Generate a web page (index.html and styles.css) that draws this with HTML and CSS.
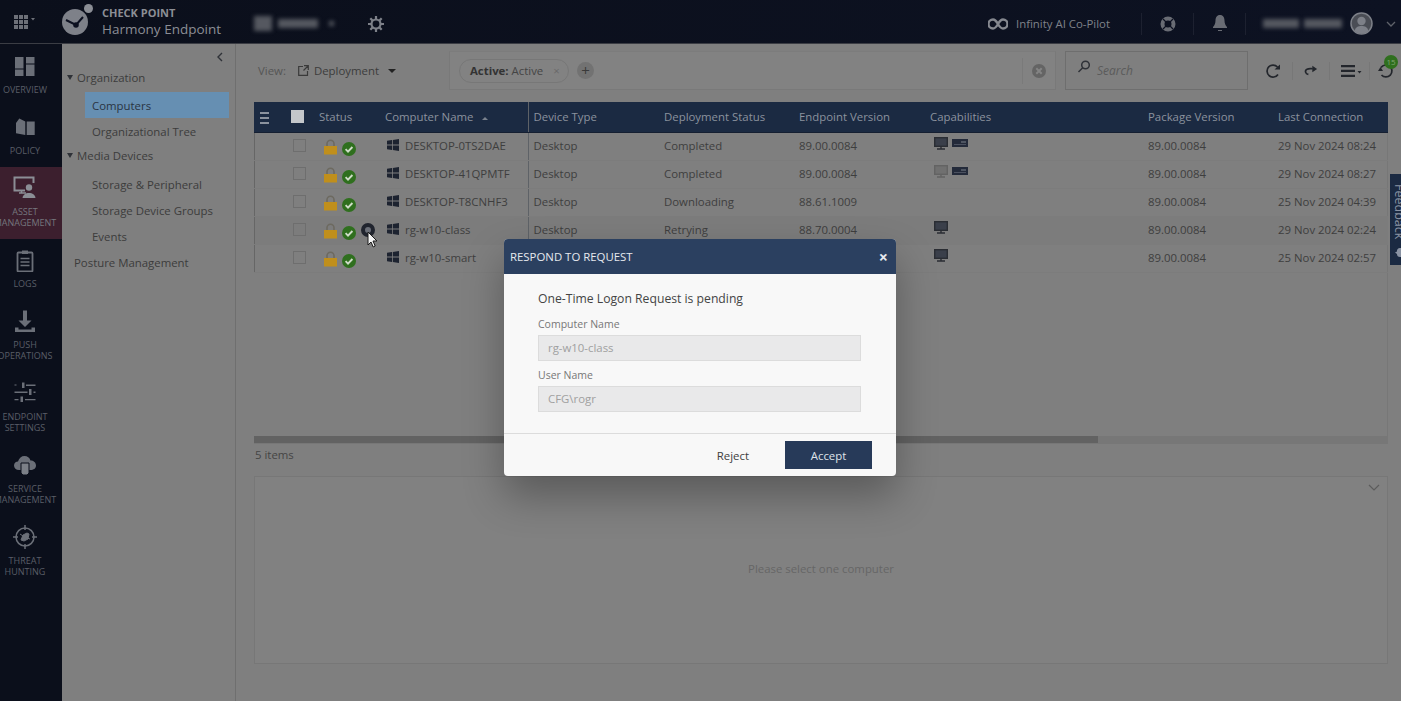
FILE: index.html
```html
<!DOCTYPE html>
<html lang="en">
<head>
<meta charset="UTF-8">
<meta name="viewport" content="width=device-width, initial-scale=1.0">
<title>Harmony Endpoint</title>
<link rel="stylesheet" href="styles.css">
</head>
<body>

<svg class="defs" width="0" height="0">
    <symbol id="win" viewBox="0 0 12 12">
        <path d="M0 1.8 5 1v4.6H0zM5.8 .9 12 0v5.6H5.8zM0 6.4h5V11l-5-.8zM5.8 6.4H12V12l-6.2-.9z"/>
    </symbol>
    <symbol id="lock" viewBox="0 0 13 16">
        <path class="lock-bow" d="M3 8V4.8a3.5 3.5 0 0 1 7 0V8" fill="none" stroke="#6d6a60" stroke-width="1.6"/>
        <rect y="7" width="13" height="8.5" fill="#c08f1c"/>
    </symbol>
    <symbol id="ok" viewBox="0 0 14 14">
        <circle cx="7" cy="7" r="7" fill="#2f6f1e"/>
        <path d="M3.6 7.2 6 9.6l4.4-4.6" fill="none" stroke="#cfdcc8" stroke-width="1.9"/>
    </symbol>
    <symbol id="screen" viewBox="0 0 14 13">
        <rect x=".7" y=".7" width="12.6" height="8.6" fill="#3a3f4a" stroke="#2a2d33" stroke-width="1.4"/>
        <path d="M7 9.5v2M3 12h8" stroke="#2a2d33" stroke-width="1.4"/>
    </symbol>
    <symbol id="screen-off" viewBox="0 0 14 13">
        <rect x=".7" y=".7" width="12.6" height="8.6" fill="#707070" stroke="#636363" stroke-width="1.4"/>
        <path d="M7 9.5v2M3 12h8" stroke="#636363" stroke-width="1.4"/>
    </symbol>
    <symbol id="drive" viewBox="0 0 16 8">
        <rect width="16" height="8" fill="#232a3a"/>
        <path d="M9 3h5" stroke="#7b808a"/>
        <path d="M2 5.500h12" stroke="#4b5160"/>
    </symbol>
</svg>

<header class="topbar">
    <div class="topbar-left">
        <svg class="apps" width="22" height="14" viewBox="0 0 22 14" fill="#6d7078">
            <path d="M0 0h4v4H0zM5 0h4v4H5zM10 0h4v4h-4zM0 5h4v4H0zM5 5h4v4H5zM10 5h4v4h-4zM0 10h4v4H0zM5 10h4v4H5zM10 10h4v4h-4zM17 3h4l-2 2.500z"/>
        </svg>
        <svg class="logo" width="32" height="32" viewBox="0 0 32 32">
            <circle cx="13" cy="18" r="13" fill="#7e8189"/>
            <circle cx="26.500" cy="4.500" r="4.500" fill="#8b8e95"/>
            <path d="M4 16l10 5 7-8" fill="none" stroke="#0c1020" stroke-width="2"/>
            <circle cx="14" cy="21" r="2.800" fill="#0c1020"/>
        </svg>
        <div class="brand">
            <div class="brand-top">CHECK POINT</div>
            <div class="brand-name">Harmony Endpoint</div>
        </div>
        <div class="blur-group">
            <span class="blur b1"></span><span class="blur b2"></span><span class="blur b3"></span>
        </div>
        <svg class="gear" width="16" height="16" viewBox="0 0 16 16">
            <circle cx="8" cy="8" r="4.500" fill="none" stroke="#7d8088" stroke-width="2.200"/>
            <path d="M8 0v3M8 13v3M0 8h3M13 8h3M2.300 2.300l2.100 2.100M11.600 11.600l2.100 2.100M2.300 13.700l2.100-2.100M11.600 4.400l2.100-2.100" stroke="#7d8088" stroke-width="2.200"/>
        </svg>
    </div>
    <div class="topbar-right">
        <svg width="20" height="12" viewBox="0 0 20 12">
            <path d="M10 6C8 2.500 6.800 1.500 5 1.500a4.500 4.500 0 0 0 0 9c1.800 0 3-1 5-4.500s3.200-4.500 5-4.500a4.500 4.500 0 0 1 0 9c-1.800 0-3-1-5-4.500z" fill="none" stroke="#85888f" stroke-width="2.400"/>
        </svg>
        <span class="copilot">Infinity AI Co-Pilot</span>
        <span class="top-sep"></span>
        <svg class="top-icon" width="16" height="16" viewBox="0 0 16 16">
            <circle cx="8" cy="8" r="5.500" fill="none" stroke="#696c74" stroke-width="4"/>
            <path d="M3 3l3 3M13 3l-3 3M3 13l3-3M13 13l-3-3" stroke="#0c1020" stroke-width="1.200"/>
        </svg>
        <span class="top-sep"></span>
        <svg class="top-icon" width="16" height="17" viewBox="0 0 16 17" fill="#696c74">
            <path d="M8 0c3.200 0 4.500 2.500 4.500 5.500 0 3 1 4.800 2.500 6.500v1H1v-1c1.500-1.700 2.500-3.500 2.500-6.500C3.500 2.500 4.800 0 8 0zM6 15h4v1H6z"/>
        </svg>
        <span class="top-sep"></span>
        <div class="blur-user"><span class="blur u1"></span><span class="blur u2"></span></div>
        <svg class="avatar" width="23" height="23" viewBox="0 0 23 23">
            <circle cx="11.500" cy="11.500" r="10.500" fill="#4a4d55" stroke="#7d8088" stroke-width="1.500"/>
            <circle cx="11.500" cy="9" r="4.200" fill="#7d8088"/>
            <path d="M4.500 19c1-4 3.500-5 7-5s6 1 7 5a10 10 0 0 1-14 0z" fill="#7d8088"/>
        </svg>
        <svg class="chev" width="10" height="6" viewBox="0 0 10 6">
            <path d="M1 1l4 4 4-4" fill="none" stroke="#5f626a" stroke-width="1.300"/>
        </svg>
    </div>
</header>

<div class="layout">
    <nav class="rail">
        <a class="rail-item">
            <svg width="24" height="24" viewBox="0 0 24 24" fill="#6b6f78">
                <path d="M2 3h8.500v11.500H2zM13 3h8.500v6.500H13zM2 15.500h8.500V22H2zM13 10.500h8.500V22H13z"/>
            </svg>
            <span>Overview</span>
        </a>
        <a class="rail-item">
            <svg width="24" height="24" viewBox="0 0 24 24" fill="#6b6f78">
                <path d="M3 8l3.300-4.500 6 3V20L3 18.300zM13.700 6.500h8V20h-8z"/>
            </svg>
            <span>Policy</span>
        </a>
        <a class="rail-item active">
            <svg width="24" height="24" viewBox="0 0 24 24" fill="none" stroke="#8b8e95">
                <path d="M12 14.500H1.500V1.500h19V7" stroke-width="2"/>
                <path d="M6 17h7M8.500 15v2" stroke-width="1.500"/>
                <circle cx="16" cy="11.500" r="3.200" fill="#8b8e95" stroke="none"/>
                <path d="M9.500 22c.5-3.500 3-5 6.500-5s6 1.500 6.500 5z" fill="#8b8e95" stroke="none"/>
            </svg>
            <span>Asset</span>
            <span>Management</span>
        </a>
        <a class="rail-item">
            <svg width="24" height="24" viewBox="0 0 24 24" fill="none" stroke="#6b6f78">
                <rect x="4.500" y="4.500" width="15" height="19" rx="1" stroke-width="1.800"/>
                <path d="M9 2.500h6v3.500H9z" fill="#6b6f78" stroke="none"/>
                <path d="M7.500 10.500h9M7.500 14h9M7.500 17.500h9" stroke-width="1.500"/>
            </svg>
            <span>Logs</span>
        </a>
        <a class="rail-item">
            <svg width="24" height="24" viewBox="0 0 24 24" fill="#6b6f78">
                <path d="M10 1.500h4v10h4.500L12 18l-6.500-6.500H10zM2 18.500h3.500v2h13v-2H22V23H2z"/>
            </svg>
            <span>Push</span>
            <span>Operations</span>
        </a>
        <a class="rail-item">
            <svg width="24" height="24" viewBox="0 0 24 24" fill="#6b6f78">
                <path d="M1.500 3.500h2v1h-2zM9 1.500h2.500V7H9zM13 3.500h9.500v1.500H13zM1.500 10.500h13V12h-13zM16 8h2.500v6H16zM20.500 10.500h2V12h-2zM1.500 18h4v1.200h-4zM7.500 15.500H10V21H7.500zM12 18h10.500v1.200H12z"/>
            </svg>
            <span>Endpoint</span>
            <span>Settings</span>
        </a>
        <a class="rail-item">
            <svg width="24" height="24" viewBox="0 0 24 24" fill="#6b6f78">
                <path d="M6 17C3 17 1 15 1 12.500S3 8.500 5 8.500C6 5 8.500 3 11.500 3c3 0 5 1.500 6 4.500 3 0 5.500 2 5.500 5s-2.500 4.500-5.500 4.500z"/>
                <path d="M8 10h8v10l-2 2h-4l-2-2z" fill="#7b7f87" stroke="#0b0f1b"/>
            </svg>
            <span>Service</span>
            <span>Management</span>
        </a>
        <a class="rail-item">
            <svg width="24" height="24" viewBox="0 0 24 24" fill="none" stroke="#6b6f78" stroke-width="1.500">
                <circle cx="12" cy="12" r="9"/>
                <path d="M12 0v5M12 19v5M0 12h5M19 12h5"/>
                <path d="M8 15l2-5 4-2 2 1-1 5-4 2zM7 9l3 2M17 14l-3-1" fill="#6b6f78" stroke-width="1"/>
            </svg>
            <span>Threat</span>
            <span>Hunting</span>
        </a>
    </nav>

    <aside class="sidebar">
        <div class="collapse">
            <svg width="6" height="10" viewBox="0 0 6 10"><path d="M5 1 1 5l4 4" fill="none" stroke="#2f3238" stroke-width="1.400"/></svg>
        </div>
        <div class="tree-head tree-org"><i class="tree-arrow"></i>Organization</div>
        <div class="tree-leaf selected">Computers</div>
        <div class="tree-leaf">Organizational Tree</div>
        <div class="tree-head tree-media"><i class="tree-arrow"></i>Media Devices</div>
        <div class="tree-leaf">Storage &amp; Peripheral</div>
        <div class="tree-leaf">Storage Device Groups</div>
        <div class="tree-leaf">Events</div>
        <div class="tree-root">Posture Management</div>
    </aside>

    <main class="main">
        <div class="toolbar">
            <div class="view">
                <span class="view-label">View:</span>
                <svg width="11" height="11" viewBox="0 0 11 11" fill="none" stroke="#3a3a3a" stroke-width="1.200">
                    <path d="M5 1.500H.7v8.800h8.800V6M6 .7h4.300V5M10 1 5.500 5.500"/>
                </svg>
                <span class="view-value">Deployment</span>
                <i class="caret"></i>
            </div>
            <div class="filters">
                <div class="chip"><b>Active:</b> Active <span class="chip-x">×</span></div>
                <div class="chip-add">+</div>
                <div class="filters-clear">
                    <svg width="14" height="14" viewBox="0 0 14 14">
                        <circle cx="7" cy="7" r="7" fill="#646464"/>
                        <path d="M4.300 4.300l5.400 5.400M9.700 4.300 4.300 9.700" stroke="#848484" stroke-width="2"/>
                    </svg>
                </div>
            </div>
            <div class="search">
                <svg width="14" height="14" viewBox="0 0 14 14" fill="none" stroke="#2f3238" stroke-width="1.500">
                    <circle cx="8.500" cy="5" r="3.800"/>
                    <path d="M5.700 7.800 1.500 12"/>
                </svg>
                <span>Search</span>
            </div>
            <div class="tools">
                <svg width="16" height="16" viewBox="0 0 16 16" fill="none" stroke="#23262c" stroke-width="1.700">
                    <path d="M13 11.500A6 6 0 1 1 12.500 4"/>
                    <path d="M9.500 6.500h5.500V1.500z" fill="#23262c" stroke="none"/>
                </svg>
                <span class="tool-sep"></span>
                <svg width="14" height="11" viewBox="0 0 16 12" fill="none" stroke="#23262c" stroke-width="1.900">
                    <path d="M5 10.500C1.500 10 .5 6 3.500 4.500 5.500 3.500 8 4 10 4"/>
                    <path d="M9.500 .5 15 4.200 9.500 8z" fill="#23262c" stroke="none"/>
                </svg>
                <span class="tool-sep"></span>
                <svg width="21" height="12" viewBox="0 0 21 12" fill="#23262c">
                    <path d="M0 0h14v2.300H0zM0 4.800h14v2.300H0zM0 9.700h14V12H0zM16.500 6h4l-2 2.500z"/>
                </svg>
                <span class="tool-sep tool-sep-last"></span>
                <div class="history">
                    <svg width="16" height="16" viewBox="0 0 16 16" fill="none" stroke="#23262c" stroke-width="1.700">
                        <path d="M3 4.500A6 6 0 1 1 3.500 12"/>
                        <path d="M0 8h5L2.500 4z" fill="#23262c" stroke="none"/>
                    </svg>
                    <span class="badge">15</span>
                </div>
            </div>
        </div>

        <section class="grid">
            <table class="computers">
                <colgroup>
                    <col class="c-menu"><col class="c-check"><col class="c-status"><col class="c-name">
                    <col class="c-type"><col class="c-deploy"><col class="c-ver"><col class="c-cap">
                    <col class="c-pkg"><col class="c-last">
                </colgroup>
                <thead>
                    <tr>
                        <th class="cell-menu">
                            <svg width="9" height="12" viewBox="0 0 9 12" fill="#8b929e"><path d="M0 0h9v2H0zM0 5h9v2H0zM0 10h9v2H0z"/></svg>
                        </th>
                        <th><span class="head-check"></span></th>
                        <th class="cell-status">Status</th>
                        <th class="cell-name">Computer Name <i class="sort"></i></th>
                        <th>Device Type</th>
                        <th>Deployment Status</th>
                        <th>Endpoint Version</th>
                        <th>Capabilities</th>
                        <th>Package Version</th>
                        <th>Last Connection</th>
                    </tr>
                </thead>
                <tbody>
                    <tr>
                        <td></td><td><span class="row-check"></span></td>
                        <td class="cell-status"><svg class="i-lock"><use href="#lock"/></svg><svg class="i-ok"><use href="#ok"/></svg></td>
                        <td class="cell-name"><svg class="i-win"><use href="#win"/></svg>DESKTOP-0TS2DAE</td>
                        <td>Desktop</td><td>Completed</td><td>89.00.0084</td>
                        <td class="cell-cap"><svg class="i-screen"><use href="#screen"/></svg><svg class="i-drive"><use href="#drive"/></svg></td>
                        <td>89.00.0084</td><td>29 Nov 2024 08:24</td>
                    </tr>
                    <tr>
                        <td></td><td><span class="row-check"></span></td>
                        <td class="cell-status"><svg class="i-lock"><use href="#lock"/></svg><svg class="i-ok"><use href="#ok"/></svg></td>
                        <td class="cell-name"><svg class="i-win"><use href="#win"/></svg>DESKTOP-41QPMTF</td>
                        <td>Desktop</td><td>Completed</td><td>89.00.0084</td>
                        <td class="cell-cap"><svg class="i-screen"><use href="#screen-off"/></svg><svg class="i-drive"><use href="#drive"/></svg></td>
                        <td>89.00.0084</td><td>29 Nov 2024 08:27</td>
                    </tr>
                    <tr>
                        <td></td><td><span class="row-check"></span></td>
                        <td class="cell-status"><svg class="i-lock"><use href="#lock"/></svg><svg class="i-ok"><use href="#ok"/></svg></td>
                        <td class="cell-name"><svg class="i-win"><use href="#win"/></svg>DESKTOP-T8CNHF3</td>
                        <td>Desktop</td><td>Downloading</td><td>88.61.1009</td>
                        <td class="cell-cap"></td>
                        <td>89.00.0084</td><td>25 Nov 2024 04:39</td>
                    </tr>
                    <tr class="hover">
                        <td></td><td><span class="row-check"></span></td>
                        <td class="cell-status">
                            <svg class="i-lock"><use href="#lock"/></svg><svg class="i-ok"><use href="#ok"/></svg>
                            <svg class="i-otl" viewBox="0 0 14 14">
                                <circle cx="7" cy="7" r="5" fill="#6b6f78" stroke="#20242e" stroke-width="4"/>
                            </svg>
                        </td>
                        <td class="cell-name"><svg class="i-win"><use href="#win"/></svg>rg-w10-class</td>
                        <td>Desktop</td><td>Retrying</td><td>88.70.0004</td>
                        <td class="cell-cap"><svg class="i-screen"><use href="#screen"/></svg></td>
                        <td>89.00.0084</td><td>29 Nov 2024 02:24</td>
                    </tr>
                    <tr>
                        <td></td><td><span class="row-check"></span></td>
                        <td class="cell-status"><svg class="i-lock"><use href="#lock"/></svg><svg class="i-ok"><use href="#ok"/></svg></td>
                        <td class="cell-name"><svg class="i-win"><use href="#win"/></svg>rg-w10-smart</td>
                        <td></td><td></td><td></td>
                        <td class="cell-cap"><svg class="i-screen"><use href="#screen"/></svg></td>
                        <td>89.00.0084</td><td>25 Nov 2024 02:57</td>
                    </tr>
                </tbody>
            </table>
            <div class="hscroll"><div class="hscroll-thumb"></div></div>
        </section>

        <div class="count">5 items</div>

        <section class="details">
            <svg class="details-toggle" width="12" height="7" viewBox="0 0 12 7">
                <path d="M1 1l5 5 5-5" fill="none" stroke="#5c5c5c" stroke-width="1.200"/>
            </svg>
            <span>Please select one computer</span>
        </section>
    </main>
</div>

<div class="feedback">
    <span>Feedback</span>
    <svg width="11" height="12" viewBox="0 0 11 12" fill="#8a93a3">
        <path d="M5 1h6v9H5a3 3 0 0 1-3-3L0 5.500 2 4.500A3 3 0 0 1 5 1z"/>
    </svg>
</div>

<svg class="cursor" width="12" height="18" viewBox="0 0 12 18">
    <path d="M1 1v13l3-3 2.200 5 2-1-2.200-5H10z" fill="#f4f4f4" stroke="#1a1a1a"/>
</svg>

<div class="modal">
    <div class="modal-head">
        <span>RESPOND TO REQUEST</span>
        <span class="modal-close">×</span>
    </div>
    <div class="modal-body">
        <div class="modal-title">One-Time Logon Request is pending</div>
        <label class="field-label">Computer Name</label>
        <div class="field-input">rg-w10-class</div>
        <label class="field-label">User Name</label>
        <div class="field-input">CFG\rogr</div>
    </div>
    <div class="modal-foot">
        <button type="button" class="btn-reject">Reject</button>
        <button type="button" class="btn-accept">Accept</button>
    </div>
</div>

</body>
</html>
```

FILE: styles.css
```css
* {
    box-sizing: border-box;
}
html, body {
    height: 100%;
}
body {
    margin: 0;
    overflow: hidden;
    position: relative;
    font-family: "Open Sans", Arial, sans-serif;
    font-size: 11.4px;
    color: #3c3c3c;
    background-color: #7f7f7f;
}
.defs {
    position: absolute;
}

/* top bar */
.topbar {
    height: 44px;
    padding-top: 4px;
    display: flex;
    justify-content: space-between;
    align-items: center;
    background: linear-gradient(90deg, #0b0f1b, #0d1222);
    border-bottom: 1px solid #3b3d44;
}
.topbar-left,
.topbar-right {
    display: flex;
    align-items: center;
}
.apps {
    margin-left: 14px;
    margin-top: -3px;
}
.logo {
    margin-left: 26px;
    margin-top: -7px;
}
.brand {
    margin-left: 8px;
    color: #8b8e95;
}
.brand-top {
    font-size: 11px;
    font-weight: 700;
    line-height: 14px;
    margin-top: -3px;
}
.brand-name {
    font-size: 13.5px;
    line-height: 19px;
}
.blur {
    display: inline-block;
    background: #555860;
    filter: blur(2px);
}
.blur-group {
    display: flex;
    align-items: center;
    margin-left: 33px;
    width: 114px;
}
.b1 {
    width: 18px;
    height: 15px;
}
.b2 {
    width: 40px;
    height: 9px;
    margin-left: 6px;
}
.b3 {
    width: 5px;
    height: 5px;
    margin-left: 11px;
}
.copilot {
    margin-left: 8px;
    width: 125px;
    color: #7f828a;
}
.top-sep {
    width: 1px;
    height: 22px;
    background: #1d2130;
}
.top-icon {
    margin: 0 17.5px;
}
.blur-user {
    display: flex;
    margin-left: 17px;
    gap: 5px;
}
.u1 {
    width: 36px;
    height: 9px;
}
.u2 {
    width: 38px;
    height: 9px;
}
.avatar {
    margin-left: 8px;
}
.chev {
    margin: 0 5px 0 13px;
}

/* main layout */
.layout {
    display: flex;
    height: 657px;
}

.rail {
    width: 62px;
    flex-shrink: 0;
    padding-top: 1px;
    overflow: hidden;
    background-color: #0b0f1b;
}
.rail-item {
    display: flex;
    flex-direction: column;
    align-items: center;
    padding: 9px 12px 11px 0;
    color: #5a5e67;
    font-size: 9px;
    line-height: 11px;
    text-transform: uppercase;
    white-space: nowrap;
}
.rail-item svg {
    margin-bottom: 6px;
}
.rail-item.active {
    background-color: #3c1f2e;
    color: #75767d;
}

.sidebar {
    position: relative;
    width: 174px;
    flex-shrink: 0;
    padding-top: 23px;
    border-right: 1px solid #6f6f6f;
}
.collapse {
    position: absolute;
    top: 6px;
    right: 12px;
}
.tree-head {
    display: flex;
    align-items: center;
    height: 20px;
    padding-left: 5px;
}
.tree-arrow {
    width: 0;
    height: 0;
    margin-right: 4px;
    border-left: 3px solid transparent;
    border-right: 3px solid transparent;
    border-top: 5px solid #2f3238;
}
.tree-org {
    margin-bottom: 5px;
}
.tree-media {
    margin-top: 1px;
    margin-bottom: 6px;
}
.tree-leaf {
    display: flex;
    align-items: center;
    height: 26px;
    margin-left: 23px;
    margin-right: 6px;
    padding-left: 7px;
}
.tree-leaf.selected {
    background-color: #668fb2;
    color: #2a3442;
}
.tree-root {
    display: flex;
    align-items: center;
    height: 26px;
    padding-left: 12px;
}

.main {
    flex: 1;
    min-width: 0;
    padding: 7px 13px 0 18px;
}

/* toolbar */
.toolbar {
    display: flex;
    height: 51px;
}
.toolbar > div {
    flex-shrink: 0;
}
.view {
    display: flex;
    align-items: center;
    height: 39px;
    width: 195px;
    padding-left: 4px;
}
.view-label {
    color: #555;
    margin-right: 12px;
}
.view-value {
    margin-left: 5px;
}
.caret {
    width: 0;
    height: 0;
    margin-left: 9px;
    border-left: 4px solid transparent;
    border-right: 4px solid transparent;
    border-top: 4px solid #222;
}
.filters {
    display: flex;
    align-items: center;
    width: 607px;
    height: 39px;
    padding-left: 9px;
    background-color: #828282;
    border: 1px solid #797979;
    border-top-color: #7c7c7c;
}
.chip {
    height: 24px;
    width: 110px;
    padding: 0 0 0 10px;
    line-height: 22px;
    border: 1px solid #777;
    border-radius: 12px;
    color: #444;
    white-space: nowrap;
}
.chip b {
    color: #333;
}
.chip-x {
    margin-left: 7px;
    color: #6a6a6a;
}
.chip-add {
    width: 17px;
    height: 17px;
    margin-left: 8px;
    border-radius: 50%;
    background-color: #727272;
    color: #3a3a3a;
    text-align: center;
    font-size: 15px;
    line-height: 16px;
}
.filters-clear {
    display: flex;
    align-items: center;
    height: 26px;
    margin-left: auto;
    padding: 0 9px 0 9px;
    border-left: 1px solid #7a7a7a;
}
.search {
    display: flex;
    width: 183px;
    height: 39px;
    margin-left: 9px;
    padding: 8px 0 0 11px;
    gap: 6px;
    border: 1px solid #6e6e6e;
    font-style: italic;
    color: #5b5b5b;
}
.search span {
    line-height: 22px;
    font-size: 12px;
}
.tools {
    display: flex;
    align-items: center;
    height: 39px;
    margin-left: 17px;
}
.tool-sep {
    width: 1px;
    height: 18px;
    margin: 0 11px;
    background-color: #777;
}
.tool-sep-last {
    margin-left: 7px;
    margin-right: 8px;
}
.history {
    position: relative;
    height: 16px;
}
.badge {
    position: absolute;
    top: -8px;
    left: 6px;
    width: 14px;
    height: 14px;
    border-radius: 50%;
    background-color: #2f6f1e;
    color: #7fa46f;
    font-size: 8px;
    line-height: 14px;
    text-align: center;
}

/* computers table */
.grid {
    height: 342px;
    border-right: 1px solid #777;
    border-bottom: 1px solid #777;
    display: flex;
    flex-direction: column;
    justify-content: space-between;
}
.computers {
    width: 100%;
    table-layout: fixed;
    border-collapse: collapse;
}
.c-menu { width: 31px; }
.c-check { width: 27px; }
.c-status { width: 68px; }
.c-name { width: 148px; }
.c-type { width: 131px; }
.c-deploy { width: 135px; }
.c-ver { width: 131px; }
.c-cap { width: 218px; }
.c-pkg { width: 130px; }
.c-last { width: 115px; }

.computers th {
    height: 30px;
    padding: 0 0 0 5px;
    background-color: #1b2a42;
    color: #8b929e;
    font-weight: 400;
    text-align: left;
    white-space: nowrap;
    border-bottom: 1px solid #151f31;
}
.computers td {
    height: 28px;
    padding: 0 0 1px 5px;
    white-space: nowrap;
    color: #3e3e3e;
    border-bottom: 1px solid #7c7c7c;
    overflow: hidden;
}
.computers td:first-child {
    box-shadow: inset 1px 0 #666;
}
.computers th.cell-menu {
    padding-left: 6px;
}
.computers th.cell-status,
.computers td.cell-status {
    padding-left: 7px;
}
.computers td.cell-status {
    padding-left: 12px;
}
.computers th.cell-name,
.computers td.cell-name {
    border-right: 1px solid #5e6267;
}
.hover td {
    background-color: #7c7c7c;
}
.head-check {
    display: block;
    width: 13px;
    height: 13px;
    margin-left: 1px;
    background-color: #c4c7cb;
}
.row-check {
    display: block;
    width: 13px;
    height: 13px;
    margin-left: 3px;
    border: 1px solid #6e6e6e;
}
.sort {
    display: inline-block;
    width: 0;
    height: 0;
    margin-left: 6px;
    vertical-align: 1px;
    border-left: 3px solid transparent;
    border-right: 3px solid transparent;
    border-bottom: 3px solid #7a818d;
}
.computers svg {
    vertical-align: middle;
}
.i-lock {
    width: 13px;
    height: 16px;
    margin-right: 5px;
    position: relative;
    top: 1px;
}
.i-ok {
    width: 14px;
    height: 14px;
    position: relative;
    top: 3px;
}
.i-otl {
    width: 14px;
    height: 14px;
    margin-left: 2px;
}
.i-win {
    width: 12px;
    height: 12px;
    margin: -3px 6px 0 2px;
    fill: #1d2330;
}
.i-screen {
    width: 14px;
    height: 13px;
    margin: -6px 4px 0 4px;
}
.i-drive {
    width: 16px;
    height: 8px;
    margin-top: -8px;
}
.hscroll {
    height: 7px;
    background-color: #777;
}
.hscroll-thumb {
    width: 844px;
    height: 7px;
    background-color: #626262;
}

.count {
    height: 32px;
    padding-left: 1px;
    line-height: 22px;
    color: #454545;
}
.details {
    position: relative;
    display: flex;
    align-items: center;
    justify-content: center;
    height: 188px;
    padding-bottom: 3px;
    border: 1px solid #777;
    background-color: #818181;
    color: #666;
}
.details-toggle {
    position: absolute;
    top: 7px;
    right: 7px;
}

/* floating items */
.feedback {
    position: absolute;
    top: 174px;
    right: 0;
    width: 11px;
    height: 91px;
    background-color: #1b2a42;
    overflow: hidden;
}
.feedback span {
    display: block;
    writing-mode: vertical-rl;
    width: 18px;
    margin-top: 10px;
    color: #8a93a3;
    font-size: 12.5px;
    line-height: 18px;
}
.feedback svg {
    display: block;
    margin: 8px 0 0 5px;
}
.cursor {
    position: absolute;
    top: 231px;
    left: 367px;
}

/* dialog */
.modal {
    position: absolute;
    top: 239px;
    left: 504px;
    width: 392px;
    height: 237px;
    border-radius: 4px;
    overflow: hidden;
    background-color: #f8f8f8;
    box-shadow: 0 20px 40px rgba(0, 0, 0, 0.3);
}
.modal-head {
    display: flex;
    justify-content: space-between;
    align-items: center;
    height: 35px;
    padding: 0 8px 0 6px;
    background-color: #2b4060;
    color: #e6e9ee;
}
.modal-close {
    font-size: 16px;
    font-weight: 700;
}
.modal-body {
    height: 160px;
    padding: 15px 35px 0 34px;
    border-bottom: 1px solid #dcdcdc;
}
.modal-title {
    height: 20px;
    margin-bottom: 7px;
    font-size: 12.2px;
    line-height: 20px;
    color: #444;
}
.field-label {
    display: block;
    height: 16px;
    margin-bottom: 3px;
    font-size: 10.5px;
    line-height: 16px;
    color: #777;
}
.field-input {
    height: 26px;
    margin-bottom: 6px;
    padding-left: 9px;
    line-height: 23px;
    background-color: #e9e9ea;
    border: 1px solid #dcdcdc;
    color: #a0a0a0;
}
.modal-foot {
    display: flex;
    justify-content: flex-end;
    align-items: center;
    gap: 36px;
    height: 42px;
    padding-right: 24px;
}
.modal-foot button {
    font-family: inherit;
    font-size: 11.4px;
    border: none;
    cursor: pointer;
}
.btn-reject {
    padding: 0;
    background: none;
    color: #404040;
}
.btn-accept {
    width: 87px;
    height: 28px;
    background-color: #273a59;
    color: #dfe3e9;
}
```
